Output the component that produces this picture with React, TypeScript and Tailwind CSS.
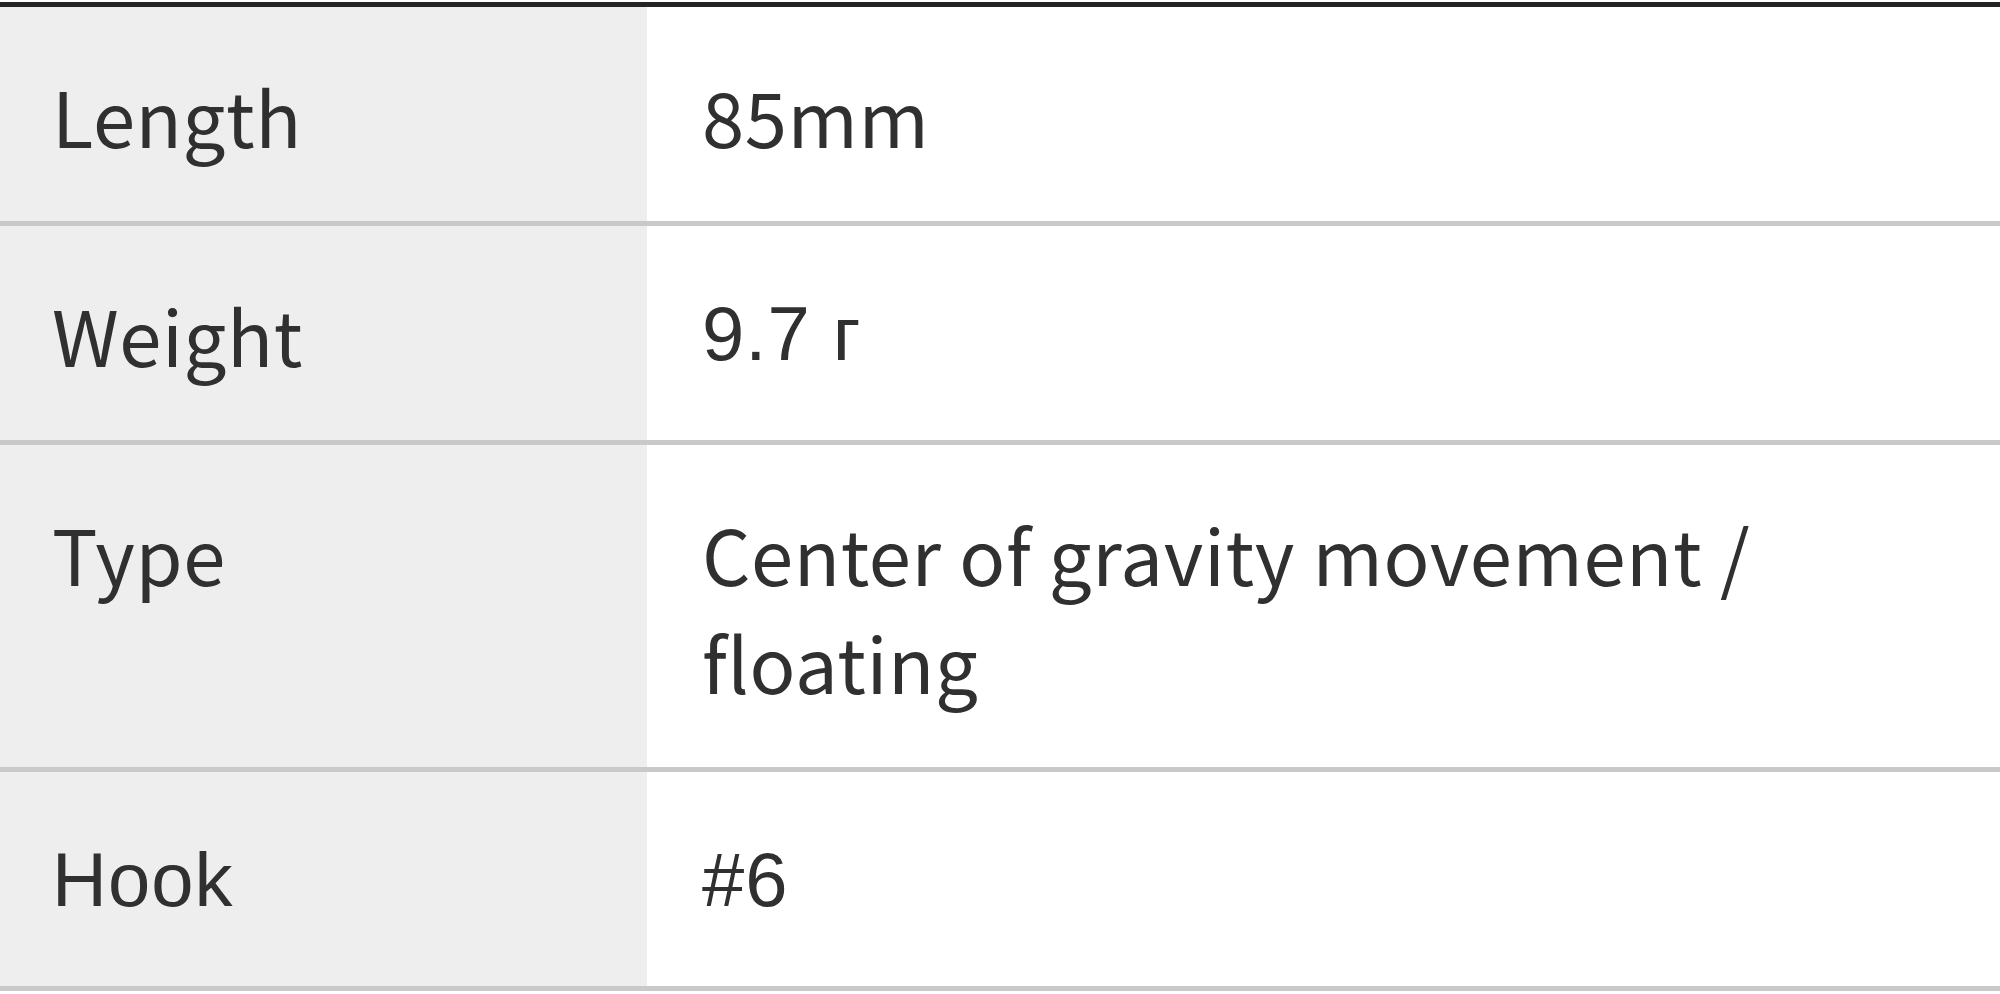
import React from "react";

const src = "font-['Noto_Sans_CJK_JP','Noto_Sans',sans-serif] tracking-[0.6px]";
const ari = "font-['Liberation_Sans',Arial,sans-serif] tracking-[1px]";

type Row = { label: string; lf?: string; value: React.ReactNode; vf?: string };

const rows: Row[] = [
  { label: "Length", value: "85mm" },
  { label: "Weight", value: "9.7 г", vf: ari },
  { label: "Type", value: "Center of gravity movement / floating" },
  { label: "Hook", lf: ari, value: "#6", vf: ari },
];

export default function App() {
  return (
    <div className="w-[2000px] h-[994px] bg-white overflow-hidden pt-[2px]">
      <div className="border-t-[5px] border-[#242424]">
        {rows.map((r) => (
          <div key={r.label} className="flex border-b-[5px] border-[#c9c9c9]">
            <div
              className={`w-[647px] shrink-0 bg-[#eeeeee] pl-[52px] pr-[40px] pt-[54px] pb-[52px] text-[76px] leading-[108px] text-[#303030] ${r.lf ?? src}`}
            >
              {r.label}
            </div>
            <div
              className={`flex-1 bg-white pl-[55px] pr-[40px] pt-[54px] pb-[52px] text-[76px] leading-[108px] text-[#303030] ${r.vf ?? src}`}
            >
              {r.value}
            </div>
          </div>
        ))}
      </div>
    </div>
  );
}
